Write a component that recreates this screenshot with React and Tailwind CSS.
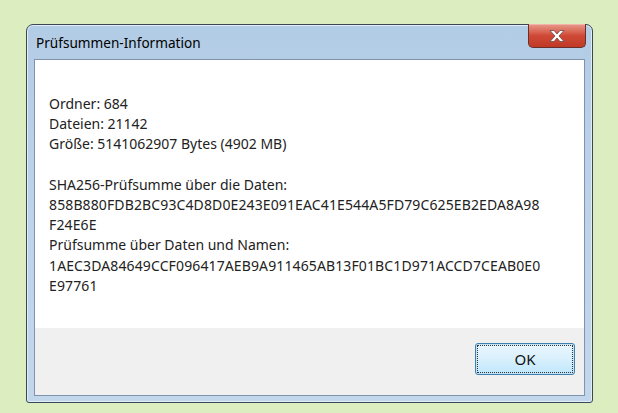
const lines = [
  ["Ordner: 684"],
  ["Dateien: 21142"],
  ["Größe: 5141062907 Bytes (4902 MB)"],
  [""],
  ["SHA256-Prüfsumme über die Daten:"],
  ["858B880FDB2BC93C4D8D0E243E091EAC41E544A5FD79C625EB2EDA8A98", true],
  ["F24E6E", true],
  ["Prüfsumme über Daten und Namen:"],
  ["1AEC3DA84649CCF096417AEB9A911465AB13F01BC1D971ACCD7CEAB0E0", true],
  ["E97761", true],
];

export default function App() {
  return (
    <div
      className="w-[618px] h-[413px] bg-[#dcedbf] pt-[24px] pl-[26px]"
      style={{ fontFamily: '"Noto Sans", "Open Sans", sans-serif' }}
    >
      <div className="w-[567px] h-[379px] flex flex-col rounded-t-[7px] rounded-b-[3px] border border-[#3b4654] bg-gradient-to-b from-[#b3cce6] via-[#bcd3ea] to-[#c2d7ec] shadow-[inset_0_0_0_1px_#e2ecf7]">
        {/* title bar */}
        <div className="h-[34px] flex items-start justify-between pl-[9px] pr-[6px]">
          <span className="text-[13.6px] leading-none text-black mt-[11px]">
            Prüfsummen-Information
          </span>
          <button className="w-[58px] h-[24px] -mt-px flex items-center justify-center rounded-b-[5px] border border-[#6b2f2a] border-t-0 bg-gradient-to-b from-[#e89a8c] via-[#cf4a36] to-[#c03826] shadow-[inset_0_1px_0_#f2b3a8]">
            <svg width="18" height="14" viewBox="0 0 18 14">
              <path
                d="M2 1.5h4l3 3.5 3-3.5h4l-5 5.5 5 5.5h-4l-3-3.5-3 3.5H2l5-5.5z"
                fill="#fff"
                stroke="#6d4a44"
                strokeWidth="0.8"
                strokeLinejoin="round"
              />
            </svg>
          </button>
        </div>
        {/* client area */}
        <div className="mx-[7px] mb-[6px] flex-1 flex flex-col border border-[#8093aa] bg-white">
          <div className="flex-1 pl-[14px] pt-[34px] text-[14px] leading-[20.2px] text-[#222]">
            {lines.map(([l, hash], i) => (
              <div key={i} className={hash ? "h-[20.2px] tracking-[0.12px]" : "h-[20.2px]"}>
                {l}
              </div>
            ))}
          </div>
          <div className="h-[67px] bg-[#f0f0f0] flex justify-end items-start pt-[15px] pr-[9px]">
            <button className="w-[100px] h-[32px] rounded-[3px] border border-[#3c7fb1] bg-gradient-to-b from-[#eaf6fd] via-[#d9f0fc] to-[#bee6fd] shadow-[inset_0_0_0_1px_#c4e5f6] flex items-center justify-center text-[15px] text-[#111]">
              <span className="outline outline-1 outline-dotted outline-[#333] w-[94px] h-[26px] flex items-center justify-center">
                OK
              </span>
            </button>
          </div>
        </div>
      </div>
    </div>
  );
}
